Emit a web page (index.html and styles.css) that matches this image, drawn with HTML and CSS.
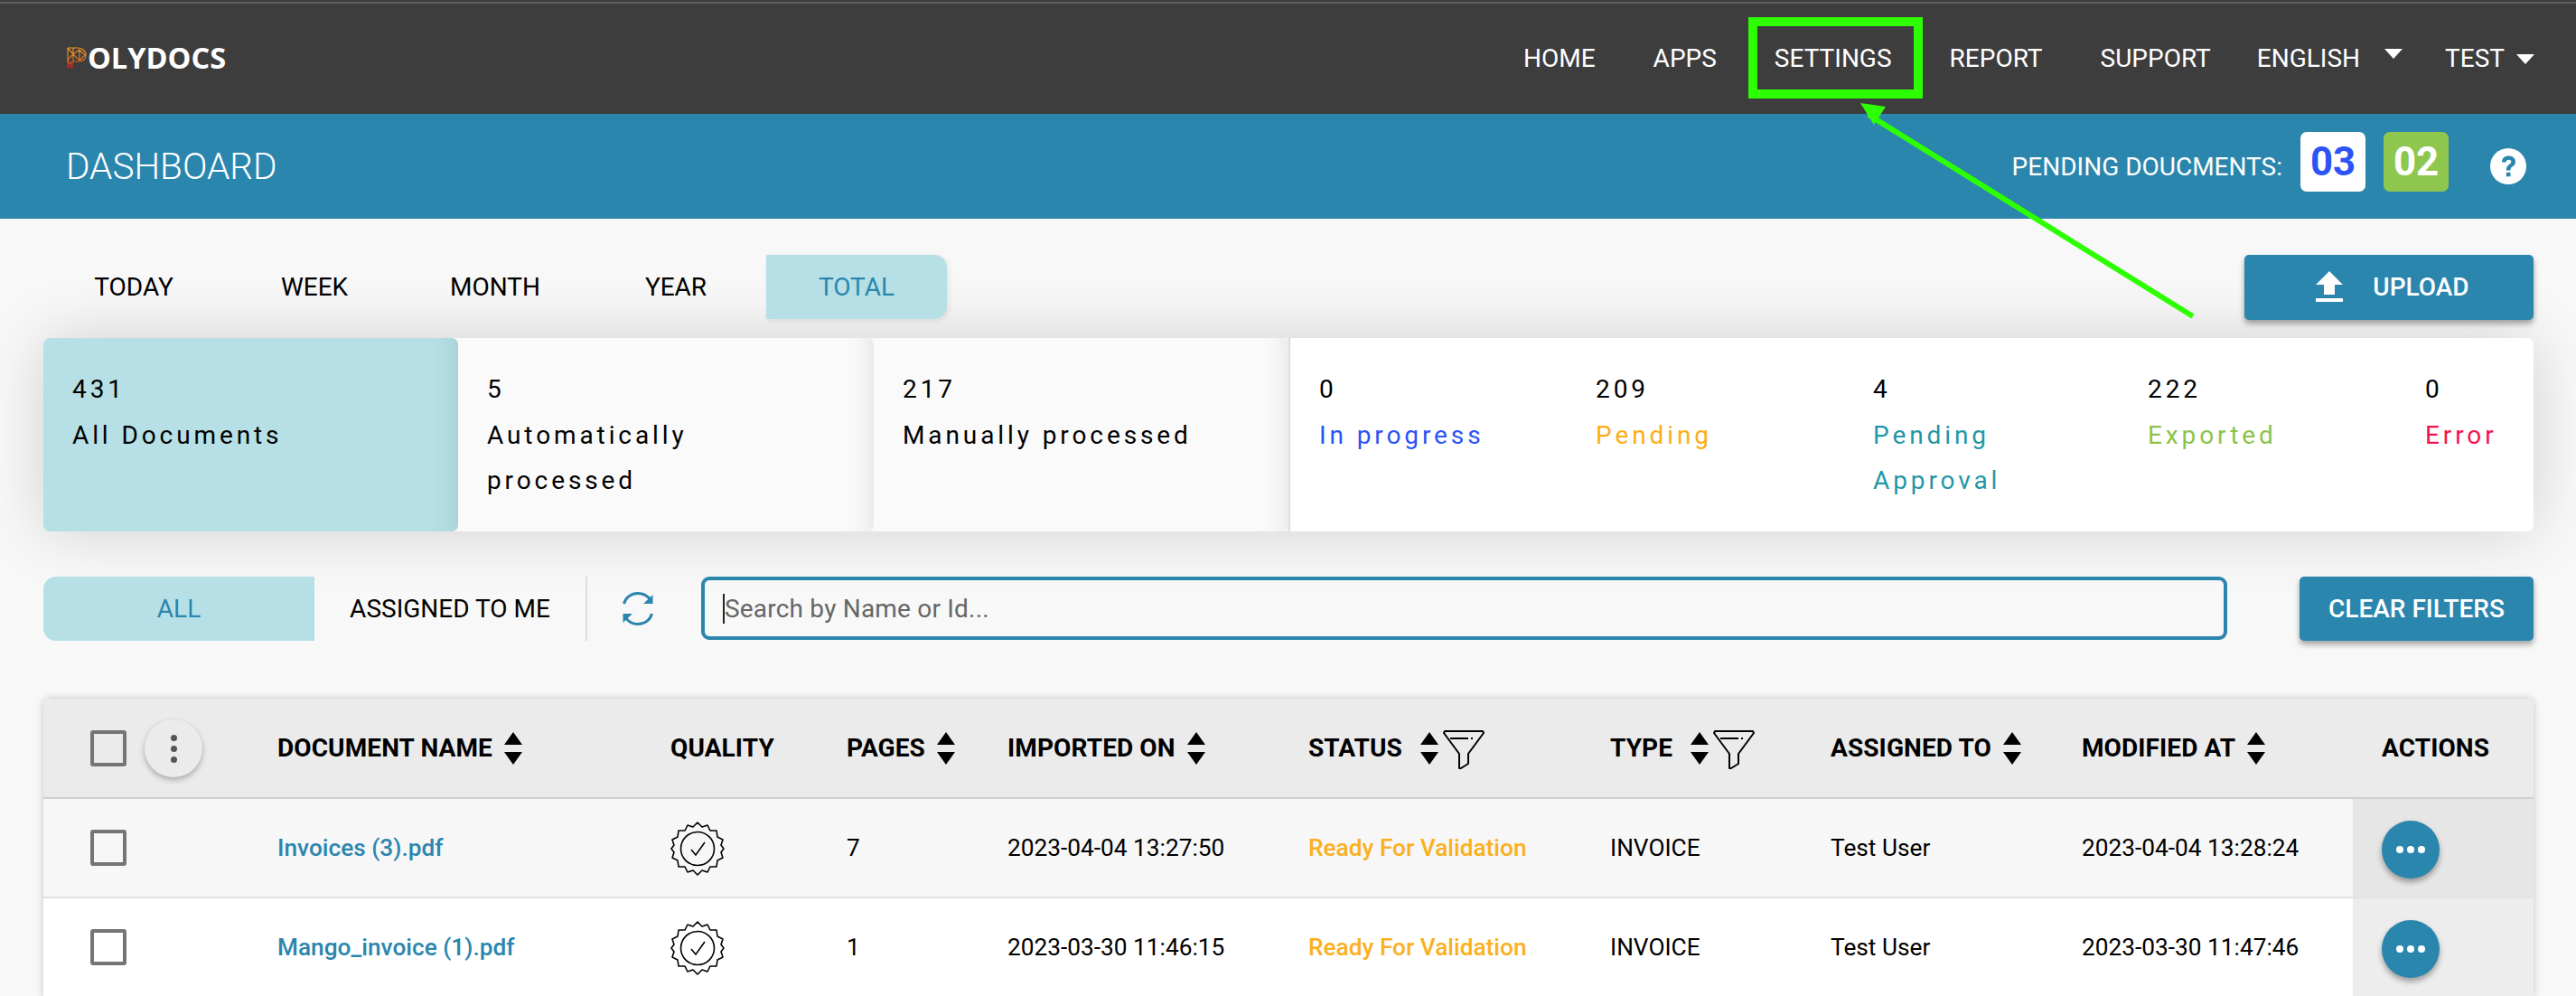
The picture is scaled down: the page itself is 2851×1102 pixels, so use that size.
FILE: index.html
```html
<!DOCTYPE html>
<html lang="en">
<head>
<meta charset="utf-8">
<title>Polydocs Dashboard</title>
<link rel="stylesheet" href="styles.css">
</head>
<body>
<svg width="0" height="0" class="defs">
  <defs><linearGradient id="logo-grad" x1="0" y1="0" x2="0" y2="1"><stop offset="0" stop-color="#f29a1e"/><stop offset=".55" stop-color="#dd7a1c"/><stop offset="1" stop-color="#c9141c"/></linearGradient></defs>
  <symbol id="sort" viewBox="0 0 20 36"><path d="M10 0 20 14H0ZM0 22H20L10 36Z" fill="#000"/></symbol>
  <symbol id="funnel" viewBox="0 0 46 44"><path d="M2 1H44L45 3 28 26V37L20 42H18V26L1 3ZM8 9H28M31 9H33" fill="none" stroke="#000" stroke-width="2" stroke-linejoin="round"/></symbol>
  <symbol id="badge" viewBox="0 0 60 60"><path d="M30 1 35 6 41 4 44 10 51 10 52 17 58 20 56 26 59 30 56 34 58 40 52 43 51 50 44 50 41 56 35 54 30 59 25 54 19 56 16 50 9 50 8 43 2 40 4 34 1 30 4 26 2 20 8 17 9 10 16 10 19 4 25 6Z" fill="none" stroke="#000" stroke-width="1.6" stroke-linejoin="round"/><circle cx="30" cy="30" r="18.500" fill="none" stroke="#000" stroke-width="1.600"/><path d="M23 31 28 37 38 23" fill="none" stroke="#000" stroke-width="1.600"/></symbol>
</svg>
<header class="topbar">
  <a class="logo">
    <svg class="logo-mark" viewBox="0 0 22 24" width="22" height="24"><g fill="none" stroke="url(#logo-grad)" stroke-width="1.200"><path d="M1 1H12C18 1 21 5 21 9S18 16 12 16H7M1 1V23H6V16"/><path d="M1 1 7 8 14 3 20 9 14 15 7 8 1 14M7 1V16M14 3V15M1 14 6 23M1 23 6 16M1 18H6"/></g></svg>
    <span class="logo-text">OLYDOCS</span>
  </a>
  <nav class="nav">
    <a class="nav-item">HOME</a>
    <a class="nav-item">APPS</a>
    <a class="nav-item">SETTINGS</a>
    <a class="nav-item">REPORT</a>
    <a class="nav-item">SUPPORT</a>
    <a class="nav-item nav-lang">ENGLISH<i class="caret caret-high"></i></a>
    <a class="nav-item nav-user">TEST<i class="caret"></i></a>
  </nav>
</header>
<section class="titlebar">
  <h1 class="title">DASHBOARD</h1>
  <div class="pending">
    <span class="pending-label">PENDING DOUCMENTS:</span>
    <span class="count count-blue">03</span>
    <span class="count count-green">02</span>
    <svg class="help" viewBox="0 0 40 40" width="40" height="40"><circle cx="20" cy="20" r="20" fill="#fff"/><path d="M13 15.500C13 11 16 8.500 20.500 8.500S28 11.300 28 15C28 18 26.300 19.300 24.500 20.500 23 21.500 22.500 22.300 22.500 24.500H17.800C17.800 21 18.800 19.500 21 18 22.500 17 23.300 16.300 23.300 15 23.300 13.500 22 12.700 20.500 12.700 18.700 12.700 17.700 13.800 17.600 15.500ZM17.800 26.700H22.500V31.300H17.800Z" fill="#2b86ae"/></svg>
  </div>
</section>
<main class="content">
  <div class="range-row">
    <div class="tabs">
      <a class="tab">TODAY</a>
      <a class="tab">WEEK</a>
      <a class="tab">MONTH</a>
      <a class="tab">YEAR</a>
      <a class="tab tab-active">TOTAL</a>
    </div>
    <button class="btn btn-upload"><svg viewBox="0 0 30 34" width="30" height="34"><path d="M15 0 30 15H21V26H9V15H0ZM0 30H30V34H0Z" fill="#fff"/></svg><span>UPLOAD</span></button>
  </div>
  <div class="stats">
    <div class="stat stat-active"><div>431</div><div>All Documents</div></div>
    <div class="stat"><div>5</div><div>Automatically processed</div></div>
    <div class="stat"><div>217</div><div>Manually processed</div></div>
    <div class="stat-group">
      <div class="sub"><div>0</div><div class="c-blue">In progress</div></div>
      <div class="sub"><div>209</div><div class="c-orange">Pending</div></div>
      <div class="sub"><div>4</div><div class="c-teal">Pending Approval</div></div>
      <div class="sub"><div>222</div><div class="c-green">Exported</div></div>
      <div class="sub"><div>0</div><div class="c-red">Error</div></div>
    </div>
  </div>
  <div class="filter-row">
    <div class="seg seg-active">ALL</div>
    <div class="seg">ASSIGNED TO ME</div>
    <div class="refresh">
      <svg viewBox="0 0 34 37" width="34" height="37"><g fill="none" stroke="#2b86ae" stroke-width="3"><path d="M1.500 13C3.500 6 9.500 1.500 17 1.500 23 1.500 28 4.500 31 9"/><path d="M32.500 24C30.500 31 24.500 35.500 17 35.500 11 35.500 6 32.500 3 28"/></g><path d="M33.500 3V13H23ZM.5 34V24H11Z" fill="#2b86ae"/></svg>
    </div>
    <div class="search"><i class="cursor"></i><span class="placeholder">Search by Name or Id...</span></div>
    <button class="btn btn-clear">CLEAR FILTERS</button>
  </div>
  <div class="table">
    <div class="row row-head">
      <div class="cell cell-check">
        <i class="check"></i>
        <span class="kebab"><i></i><i></i><i></i></span>
      </div>
      <div class="cell">DOCUMENT NAME<svg class="sort"><use href="#sort"/></svg></div>
      <div class="cell">QUALITY</div>
      <div class="cell">PAGES<svg class="sort"><use href="#sort"/></svg></div>
      <div class="cell">IMPORTED ON<svg class="sort"><use href="#sort"/></svg></div>
      <div class="cell">STATUS<svg class="sort sort-wide"><use href="#sort"/></svg><svg class="funnel"><use href="#funnel"/></svg></div>
      <div class="cell">TYPE<svg class="sort sort-wide"><use href="#sort"/></svg><svg class="funnel"><use href="#funnel"/></svg></div>
      <div class="cell">ASSIGNED TO<svg class="sort"><use href="#sort"/></svg></div>
      <div class="cell">MODIFIED AT<svg class="sort"><use href="#sort"/></svg></div>
      <div class="cell cell-actions">ACTIONS</div>
    </div>
    <div class="row row-odd">
      <div class="cell cell-check"><i class="check"></i></div>
      <div class="cell"><a class="doc-link">Invoices (3).pdf</a></div>
      <div class="cell"><svg class="quality"><use href="#badge"/></svg></div>
      <div class="cell">7</div>
      <div class="cell">2023-04-04 13:27:50</div>
      <div class="cell c-status">Ready For Validation</div>
      <div class="cell">INVOICE</div>
      <div class="cell">Test User</div>
      <div class="cell">2023-04-04 13:28:24</div>
      <div class="cell cell-actions"><span class="more"><i></i><i></i><i></i></span></div>
    </div>
    <div class="row row-even">
      <div class="cell cell-check"><i class="check"></i></div>
      <div class="cell"><a class="doc-link">Mango_invoice (1).pdf</a></div>
      <div class="cell"><svg class="quality"><use href="#badge"/></svg></div>
      <div class="cell">1</div>
      <div class="cell">2023-03-30 11:46:15</div>
      <div class="cell c-status">Ready For Validation</div>
      <div class="cell">INVOICE</div>
      <div class="cell">Test User</div>
      <div class="cell">2023-03-30 11:47:46</div>
      <div class="cell cell-actions"><span class="more"><i></i><i></i><i></i></span></div>
    </div>
  </div>
</main>
<div class="callout-box"></div>
<svg class="callout-arrow" viewBox="0 0 2851 1102" width="2851" height="1102"><path d="M2427 350 2068 127" stroke="#2dff02" stroke-width="6" fill="none"/><path d="M2059 114 2087 118 2074 138Z" fill="#2dff02"/></svg>
</body>
</html>
```
FILE: styles.css
```css
* { box-sizing: border-box; }
html, body { margin: 0; height: 1102px; overflow: hidden; }
body { position: relative; background: #f8f8f8; font-family: Roboto, "Liberation Sans", sans-serif; font-size: 26.25px; color: #000; }
.defs { position: absolute; }
i { display: block; }

.topbar { height: 126px; background: #3d3d3d; border-top: 2px solid #3d3d3d; display: flex; align-items: center; justify-content: space-between; padding: 0 46px 0 74px; position: relative; }
.topbar::before { content: ""; position: absolute; left: 0; right: 0; top: 0; height: 2px; background: #5c5f62; }
.logo { display: flex; align-items: center; color: #fff; }
.logo-mark { flex: none; }
.logo-text { font-family: "Open Sans", sans-serif; font-weight: 700; font-size: 32.5px; line-height: 24px; margin-left: 1px; }
.nav { display: flex; align-items: center; font-size: 28px; color: #fff; }
.nav-item { display: flex; align-items: center; padding: 0 32px; position: relative; }
.nav-lang { padding-right: 0; margin-left: -13px; }
.nav-user { padding-left: 47px; padding-right: 0; }
.caret { width: 0; height: 0; border-left: 10px solid transparent; border-right: 10px solid transparent; border-top: 11px solid #fff; margin-left: 13px; margin-top: 2px; }
.caret-high { margin-left: 27px; margin-top: -10px; }

.titlebar { height: 116px; background: #2b86ae; display: flex; align-items: center; justify-content: space-between; padding: 0 55px 0 73px; color: #fff; }
.title { margin: 0; font-size: 40.5px; font-weight: 300; }
.pending { display: flex; align-items: center; font-size: 28px; }
.pending-label { margin-right: 20px; }
.count { width: 72px; height: 66px; margin-bottom: 10px; border-radius: 7px; display: flex; align-items: center; justify-content: center; font-size: 43.75px; font-weight: 700; }
.count-blue { background: #fff; color: #2c53f5; margin-right: 20px; }
.count-green { background: #8fc74e; color: #fff; margin-right: 46px; }

.content { padding: 40px 47px 0 48px; }
.range-row { display: flex; justify-content: space-between; height: 71px; margin-bottom: 21px; font-size: 28px; }
.tabs { display: flex; }
.tab { width: 200px; display: flex; align-items: center; justify-content: center; }
.tab-active { background: #b6e0e5; color: #2b86ae; border-radius: 0 14px 14px 0; box-shadow: 2px 2px 6px rgba(0,0,0,.08); }
.btn { border: 0; background: #2b86ae; color: #fff; border-radius: 5px; font-family: inherit; font-weight: 500; font-size: 28px; box-shadow: 0 4px 6px rgba(0,0,0,.35); display: flex; align-items: center; justify-content: center; padding: 0; }
.btn-upload { width: 320px; height: 72px; gap: 33px; padding: 0 0 2px 8px; }

.stats { display: flex; height: 214px; box-shadow: 0 0 70px rgba(0,0,0,.16); border-radius: 7px; font-size: 28px; letter-spacing: 3.900px; line-height: 50.500px; }
.stat { width: 460px; padding: 32px 32px 0; background: #fafafa; border-radius: 7px; box-shadow: inset -30px 0 30px -30px rgba(0,0,0,.12); }
.stat-active { width: 459px; background: #b6e0e5; }
.stat-group { flex: 1; display: grid; grid-template-columns: 306px 307px 304px 307px 1fr; padding: 32px 0 0 32px; background: #fff; border-left: 2px solid #ddd; border-radius: 0 7px 7px 0; margin-left: -1px; }
.sub:nth-child(3) > div:last-child { width: 170px; }
.c-blue { color: #2c53f5; }
.c-orange { color: #fdad14; }
.c-teal { color: #1f97a6; }
.c-green { color: #8bc34a; }
.c-red { color: #f5124f; }

.filter-row { display: flex; align-items: stretch; height: 71px; margin-top: 50px; font-size: 28px; }
.seg { width: 300px; display: flex; align-items: center; justify-content: center; }
.seg-active { background: #b6e0e5; color: #2b86ae; border-radius: 14px 0 0 14px; }
.refresh { width: 128px; border-left: 2px solid #ddd; display: flex; align-items: center; padding-left: 39px; }
.search { width: 1689px; height: 70px; border: 4px solid #2b86ae; border-radius: 9px; display: flex; align-items: center; padding-left: 20px; color: #666; letter-spacing: .2px; }
.cursor { width: 2px; height: 33px; background: #222; flex: none; }
.btn-clear { width: 259px; margin-left: 80px; }

.table { margin-top: 64px; background: #fff; border-radius: 7px 7px 0 0; box-shadow: 0 0 8px rgba(0,0,0,.22); }
.row { display: grid; grid-template-columns: 259px 435px 195px 178px 333px 334px 244px 278px 300px 200px; align-items: stretch; }
.row-head { height: 111px; background: #ebebeb; font-weight: 700; font-size: 28px; letter-spacing: .1px; border-bottom: 2px solid #d0d0d0; border-radius: 7px 7px 0 0; }
.row-odd, .row-even { height: 110px; border-bottom: 2px solid #e2e2e2; }
.row-odd { background: #f7f7f7; }
.row-even { background: #fff; }
.cell { display: flex; align-items: center; white-space: nowrap; }
.cell-check { padding-left: 52px; gap: 20px; }
.cell-actions { padding-left: 32px; }
.row-odd .cell-actions { background: #e6e6e6; }
.row-even .cell-actions { background: #ededed; }
.check { width: 40px; height: 40px; border: 4px solid #757575; border-radius: 3px; }
.kebab { width: 64px; height: 64px; border-radius: 50%; background: #ebebeb; box-shadow: 0 3px 6px rgba(0,0,0,.28); display: flex; flex-direction: column; align-items: center; justify-content: center; gap: 5px; margin-top: 1px; }
.kebab i { width: 7px; height: 7px; border-radius: 50%; background: #555; }
.sort { width: 20px; height: 36px; margin-left: 13px; flex: none; }
.sort-wide { margin-left: 20px; }
.funnel { width: 46px; height: 44px; margin-left: 5px; margin-top: 4px; flex: none; }
.doc-link { color: #2b86ae; font-weight: 500; }
.quality { width: 60px; height: 60px; margin-top: 2px; }
.c-status { color: #fbb01d; font-weight: 500; }
.more { width: 64px; height: 64px; border-radius: 50%; background: #2b86ae; box-shadow: 0 4px 6px rgba(0,0,0,.35); display: flex; align-items: center; justify-content: center; gap: 4px; margin-top: 4px; }
.more i { width: 8px; height: 8px; border-radius: 50%; background: #fff; }

.callout-box { position: absolute; left: 1935px; top: 19px; width: 193px; height: 90px; border: 10px solid #2dff02; }
.callout-arrow { position: absolute; left: 0; top: 0; pointer-events: none; }
```
